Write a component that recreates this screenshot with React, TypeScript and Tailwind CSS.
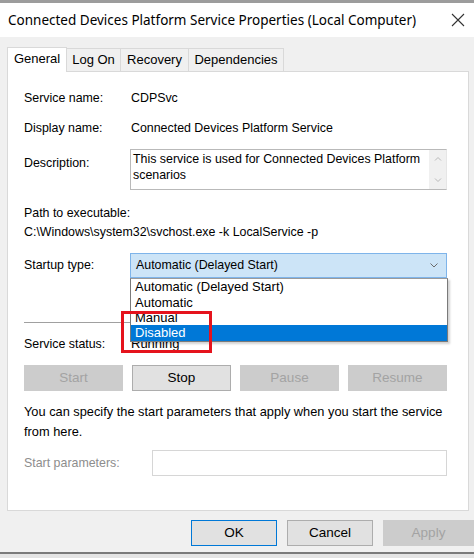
import React from 'react';

const font = "font-['Liberation_Sans',Arial,sans-serif]";

const Row: React.FC<{ label: string; className?: string; children?: React.ReactNode }> = ({ label, className = '', children }) => (
  <div className={`flex h-[16px] items-center ${className}`}>
    <div className="w-[107px] shrink-0">{label}</div>
    <div>{children}</div>
  </div>
);

const SmallButton: React.FC<{ label: string; disabled?: boolean }> = ({ label, disabled }) => (
  <div
    className={`flex h-[26px] items-center justify-center border text-[13.5px] ${
      disabled ? 'border-[#cccccc] bg-[#cccccc] text-[#a3a3a3]' : 'border-[#adadad] bg-[#e1e1e1] text-black'
    }`}
  >
    {label}
  </div>
);

export default function App() {
  return (
    <div className={`relative flex h-[558px] w-[474px] flex-col overflow-hidden bg-[#f0f0f0] text-[12.4px] text-black ${font}`}>
      <div className="h-[3px] shrink-0 bg-[#9c9c9c]" />

      {/* title bar */}
      <div className="flex h-[34px] shrink-0 items-center justify-between bg-white pl-[8px] pr-[9px]">
        <span className="font-['Noto_Sans',sans-serif] text-[13.5px]">
          Connected Devices Platform Service Properties (Local Computer)
        </span>
        <svg width="14" height="14" viewBox="0 0 14 14" className="text-[#333]">
          <path d="M1 1 L13 13 M13 1 L1 13" stroke="currentColor" strokeWidth="1.1" fill="none" />
        </svg>
      </div>

      <div className="shrink-0 pl-[7px] pr-[5px] pt-[9px]">
        {/* tabs */}
        <div className="relative z-10 flex h-[25px] items-end text-[13px]">
          <div className="-mb-px flex h-[25px] w-[60px] items-center justify-center border border-b-0 border-[#d9d9d9] bg-white pb-[2px]">
            General
          </div>
          <div className="flex h-[23px] w-[54px] items-center justify-center border border-l-0 border-b-0 border-[#d9d9d9]">
            Log On
          </div>
          <div className="flex h-[23px] w-[68px] items-center justify-center border border-l-0 border-b-0 border-[#d9d9d9]">
            Recovery
          </div>
          <div className="flex h-[23px] w-[95px] items-center justify-center border border-l-0 border-b-0 border-[#d9d9d9]">
            Dependencies
          </div>
        </div>

        {/* panel */}
        <div className="relative flex h-[440px] flex-col border border-[#d9d9d9] bg-white pl-[16px] pr-[21px]">
          <Row label="Service name:" className="mt-[18px]">CDPSvc</Row>
          <Row label="Display name:" className="mt-[14px]">Connected Devices Platform Service</Row>

          <div className="mt-[13px] flex h-[41px]">
            <div className="w-[106px] shrink-0 pt-[5px]">Description:</div>
            <div className="flex flex-1 border border-[#b9b9b9] border-r-[#e6e6e6]">
              <div className="flex-1 pl-[2px] pt-[1px] leading-[16px]">
                This service is used for Connected Devices Platform scenarios
              </div>
              <div className="flex w-[17px] flex-col items-center justify-between bg-[#f0f0f0] py-[6px]">
                <svg width="8" height="5" viewBox="0 0 8 5">
                  <path d="M1 4.5 L4 1.5 L7 4.5" stroke="#b8b8b8" fill="none" />
                </svg>
                <svg width="8" height="5" viewBox="0 0 8 5">
                  <path d="M1 0.5 L4 3.5 L7 0.5" stroke="#b8b8b8" fill="none" />
                </svg>
              </div>
            </div>
          </div>

          <div className="mt-[15px] h-[16px] leading-[16px]">Path to executable:</div>
          <div className="mt-[3px] h-[16px] leading-[16px]">C:\Windows\system32\svchost.exe -k LocalService -p</div>

          <div className="mt-[13px] flex h-[25px] items-center">
            <div className="w-[106px] shrink-0">Startup type:</div>
            <div className="relative flex-1">
              <div className="flex h-[25px] items-center justify-between border border-[#7eb4ea] bg-[#cce4f7] pl-[5px] pr-[8px]">
                <span>Automatic (Delayed Start)</span>
                <svg width="8" height="5" viewBox="0 0 8 5">
                  <path d="M0.5 0.5 L4 4 L7.5 0.5" stroke="#6b6b6b" fill="none" />
                </svg>
              </div>

              {/* open list */}
              <div className="absolute left-0 top-[25px] z-20 w-[318px] border border-[#7a7a7a] border-t-[#9a9a9a] bg-white text-[13px] leading-[16px] shadow-[2px_2px_2px_rgba(0,0,0,0.18)]">
                <div className="h-[16px] pl-[4px]">Automatic (Delayed Start)</div>
                <div className="h-[15px] pl-[4px]">Automatic</div>
                <div className="h-[15px] pl-[4px]">Manual</div>
                <div className="h-[16px] bg-[#0078d7] pl-[4px] text-white">Disabled</div>
              </div>

              {/* highlight box */}
              <div className="pointer-events-none absolute left-[-9px] top-[58px] z-30 h-[42px] w-[91px] border-[3px] border-[#e5131d]" />
            </div>
          </div>

          <div className="mt-[44px] h-px bg-[#a0a0a0]" />

          <div className="mt-[13px] flex h-[16px] items-center">
            <div className="w-[107px] shrink-0">Service status:</div>
            <div className="text-[13px]">Running</div>
          </div>

          <div className="mt-[13px] grid grid-cols-4 gap-[9px]">
            <SmallButton label="Start" disabled />
            <SmallButton label="Stop" />
            <SmallButton label="Pause" disabled />
            <SmallButton label="Resume" disabled />
          </div>

          <div className="mt-[11px] text-[12.8px] leading-[20px]">
            You can specify the start parameters that apply when you start the service from here.
          </div>

          <div className="mt-[8px] flex h-[26px] items-center">
            <div className="w-[128px] shrink-0 text-[#8d8d8d]">Start parameters:</div>
            <div className="h-[26px] flex-1 border border-[#d6d6d6] bg-white" />
          </div>
        </div>
      </div>

      {/* dialog buttons */}
      <div className="mt-[9px] flex shrink-0 justify-end gap-[10px] text-[13.5px]">
        <div className="flex h-[26px] w-[86px] items-center justify-center border border-[#0078d7] bg-[#e1e1e1]">OK</div>
        <div className="flex h-[26px] w-[86px] items-center justify-center border border-[#adadad] bg-[#e1e1e1]">Cancel</div>
        <div className="flex h-[26px] w-[91px] items-center justify-center border border-[#cccccc] bg-[#cccccc] text-[#a3a3a3]">
          Apply
        </div>
      </div>

      <div className="mt-auto h-[2px] shrink-0 bg-[#7a7a7a]" />
      <div className="h-[4px] shrink-0 bg-[#e4e4e4]" />
    </div>
  );
}
